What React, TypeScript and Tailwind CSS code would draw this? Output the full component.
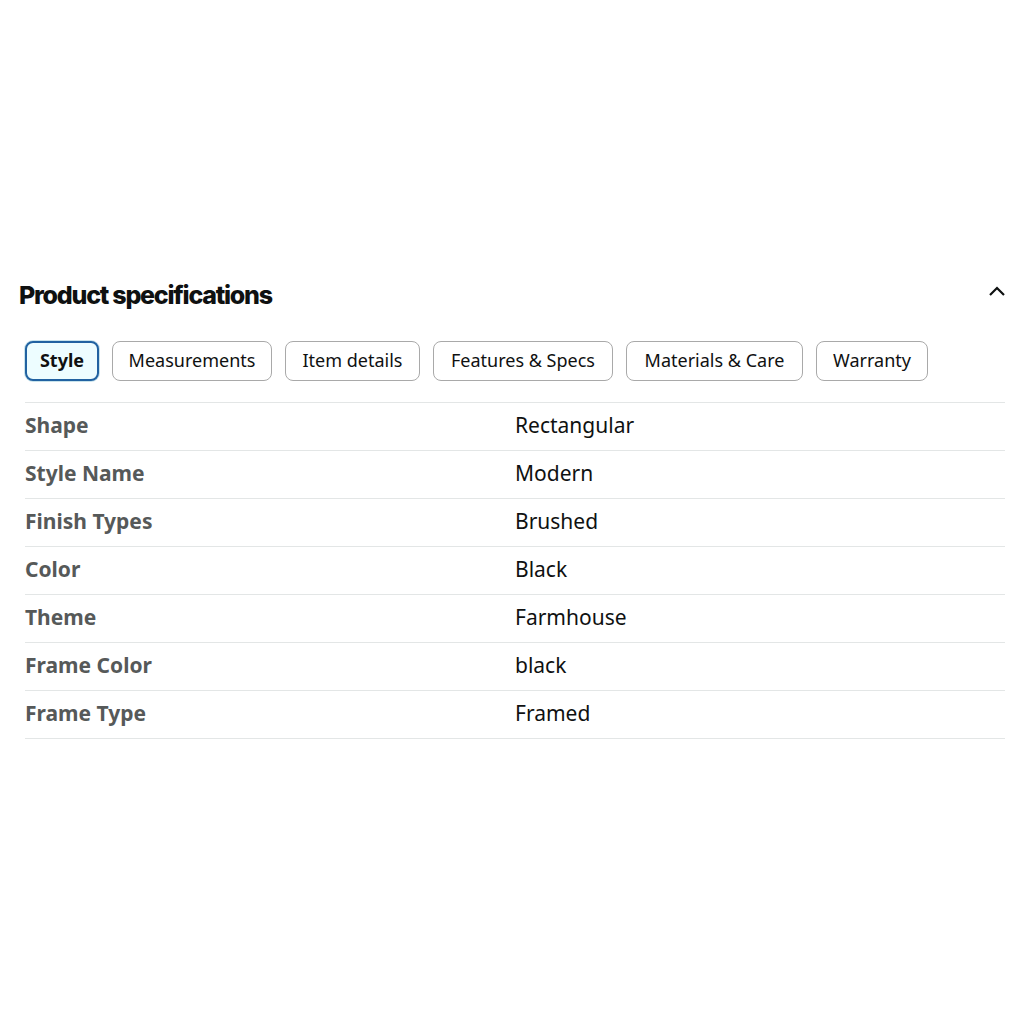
import { useState } from "react";

const tabs = [
  { label: "Style", w: "w-[74px]" },
  { label: "Measurements", w: "w-[160px]" },
  { label: "Item details", w: "w-[135px]" },
  { label: "Features & Specs", w: "w-[180px]" },
  { label: "Materials & Care", w: "w-[177px]" },
  { label: "Warranty", w: "w-[112px]" },
];

const rows = [
  ["Shape", "Rectangular"],
  ["Style Name", "Modern"],
  ["Finish Types", "Brushed"],
  ["Color", "Black"],
  ["Theme", "Farmhouse"],
  ["Frame Color", "black"],
  ["Frame Type", "Framed"],
];

export default function App() {
  const [active, setActive] = useState(0);

  return (
    <div className="min-h-screen bg-white flex flex-col justify-center font-['Noto_Sans',sans-serif] text-[#0f1111]">
      <div className="pl-[19px] pr-[19px] pb-[10px]">
        <div className="flex items-center justify-between h-[40px]">
          <h2 className="font-['Inter',sans-serif] font-extrabold text-[25px] tracking-[-0.05em]">Product specifications</h2>
          <svg width="20" height="20" viewBox="0 0 20 20" className="mr-[-2px] mt-[-8px]">
            <path d="M3 13 L10 6 L17 13" fill="none" stroke="#0f1111" strokeWidth="2.2" />
          </svg>
        </div>

        <div className="pl-[6px] mt-[25px] flex gap-[13px]">
          {tabs.map((t, i) => (
            <button
              key={t.label}
              onClick={() => setActive(i)}
              className={
                (i === active
                  ? "h-[40px] rounded-[8px] border-2 border-[#2162a1] bg-[#edfdff] text-[18px] font-bold shadow-[0_0_0_1px_#c8e3ec] "
                  : "h-[40px] rounded-[8px] border border-[#a9a9a9] bg-white text-[18px] ") + t.w
              }
            >
              {t.label}
            </button>
          ))}
        </div>

        <div className="ml-[6px] mt-[21px] border-t border-[#e3e6e6]">
          {rows.map(([k, v]) => (
            <div key={k} className="grid grid-cols-2 h-[48px] items-center border-b border-[#e3e6e6] text-[21px]">
              <div className="font-bold text-[#565959]">{k}</div>
              <div>{v}</div>
            </div>
          ))}
        </div>
      </div>
    </div>
  );
}
